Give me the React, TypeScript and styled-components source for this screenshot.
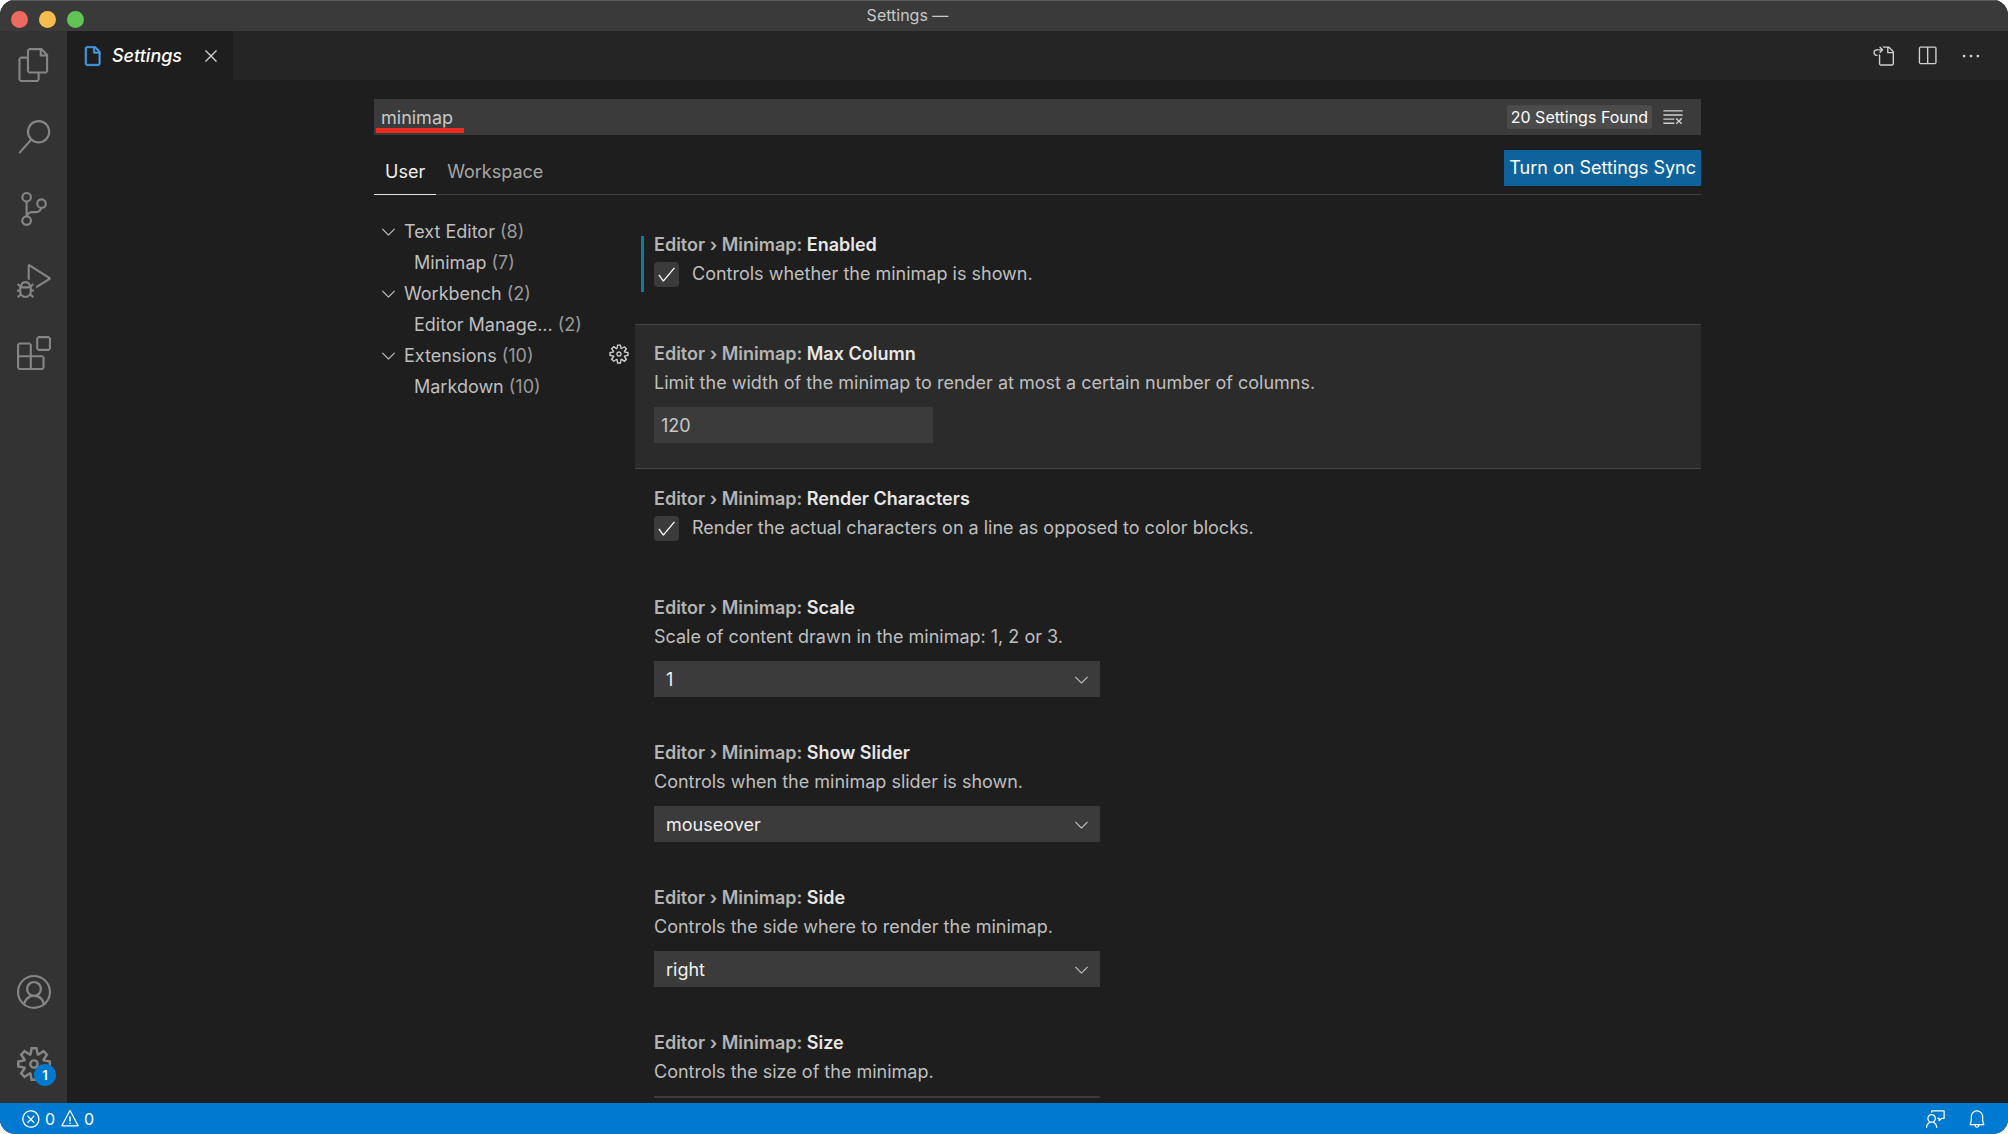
import React from "react";
import styled, { createGlobalStyle } from "styled-components";
import {
  VscAccount,
  VscBell,
  VscCheck,
  VscChevronDown,
  VscClearAll,
  VscClose,
  VscDebugAlt,
  VscEllipsis,
  VscError,
  VscExtensions,
  VscFeedback,
  VscFile,
  VscFiles,
  VscGear,
  VscGoToFile,
  VscSearch,
  VscSettingsGear,
  VscSourceControl,
  VscSplitHorizontal,
  VscWarning,
} from "react-icons/vsc";

const GlobalStyle = createGlobalStyle`
  * { box-sizing: border-box; }
  body {
    margin: 0;
    background: #ffffff;
    font-family: Inter, "Liberation Sans", sans-serif;
    font-size: 18px;
    line-height: 24px;
    color: #bfbfbf;
  }
  button, input, select { font: inherit; color: inherit; margin: 0; }
  button { background: none; border: 0; padding: 0; cursor: pointer; }
  h1, h2, ul, p { margin: 0; padding: 0; font: inherit; list-style: none; }
  a { color: inherit; text-decoration: none; }
`;

const Window = styled.div`
  display: flex;
  flex-direction: column;
  height: 100vh;
  overflow: hidden;
  border-radius: 15px;
  background: #1e1e1e;
`;

const TitleBar = styled.header`
  display: flex;
  align-items: flex-start;
  flex: none;
  height: 31px;
  padding: 2px 11px 0;
  background: #3a3a3a;
  border-top: 1px solid #5c5c5c;
`;

const Lights = styled.div`
  display: flex;
  gap: 11px;
  padding-top: 8px;
`;

const Light = styled.button<{ $color: string }>`
  width: 17px;
  height: 17px;
  border-radius: 50%;
  background: ${(p) => p.$color};
`;

const WindowTitle = styled.h1`
  flex: 1;
  padding-right: 266px;
  text-align: center;
  font-size: 16px;
  color: #c8c8c8;
`;

const Main = styled.div`
  display: flex;
  flex: 1;
  min-height: 0;
`;

const ActivityBar = styled.nav`
  display: flex;
  flex-direction: column;
  justify-content: space-between;
  flex: none;
  width: 67px;
  padding: 2px 0 7px;
  background: #333333;
`;

const ActivityGroup = styled.div`
  display: flex;
  flex-direction: column;
  gap: 8px;
`;

const ActivityButton = styled.button`
  position: relative;
  display: grid;
  place-items: center;
  height: 64px;
  color: #858585;
  font-size: 34px;
`;

const ActivityBadge = styled.span`
  position: absolute;
  right: 11px;
  bottom: 10px;
  width: 22px;
  height: 22px;
  border-radius: 50%;
  background: #007ad0;
  color: #ffffff;
  font-size: 13px;
  font-weight: 600;
  line-height: 22px;
  text-align: center;
`;

const Editor = styled.main`
  display: flex;
  flex-direction: column;
  flex: 1;
  min-width: 0;
`;

const TabBar = styled.div`
  display: flex;
  justify-content: space-between;
  flex: none;
  height: 49px;
  background: #252526;
`;

const Tab = styled.div`
  display: flex;
  align-items: center;
  width: 166px;
  padding: 0 11px 0 14px;
  background: #1e1e1e;
  color: #ffffff;
`;

const TabIcon = styled(VscFile)`
  width: 22px;
  height: 22px;
  color: #42a5f5;
  stroke: currentColor;
  stroke-width: 0.4px;
`;

const TabLabel = styled.span`
  flex: 1;
  padding-left: 9px;
  font-style: italic;
  font-weight: 500;
`;

const IconButton = styled.button<{ $size?: number }>`
  display: grid;
  place-items: center;
  flex: none;
  font-size: ${(p) => p.$size ?? 22}px;
  color: #d0d0d0;
`;

const TabActions = styled.div`
  display: flex;
  align-items: center;
  gap: 22px;
  padding-right: 26px;
`;

const Settings = styled.section`
  display: flex;
  flex-direction: column;
  flex: 1;
  min-height: 0;
  width: 100%;
  max-width: 1367px;
  margin: 0 auto;
  padding: 19px 20px 5px;
`;

const SearchBox = styled.div`
  position: relative;
  display: flex;
  align-items: center;
  flex: none;
  height: 36px;
  padding: 0 17px 0 7px;
  background: #3b3b3b;
`;

const SearchInput = styled.input`
  flex: 1;
  min-width: 0;
  padding: 1px 0 0;
  border: 0;
  outline: 0;
  background: none;
  color: #c8c8c8;
`;

const RedMark = styled.span`
  position: absolute;
  left: 2px;
  bottom: 2px;
  width: 88px;
  height: 5px;
  background: #ee2b1f;
`;

const FoundCount = styled.span`
  margin-right: 10px;
  padding: 0 4px;
  border-radius: 3px;
  background: #4b4b4b;
  color: #ffffff;
  font-size: 16px;
`;

const ScopeBar = styled.div`
  display: flex;
  align-items: flex-end;
  justify-content: space-between;
  flex: none;
  height: 60px;
  border-bottom: 1px solid #3f3f3f;
`;

const ScopeTabs = styled.div`
  display: flex;
  margin-bottom: -1px;
`;

const ScopeTab = styled.button<{ $active?: boolean }>`
  height: 46px;
  padding: 0 11px;
  border-bottom: 1px solid ${(p) => (p.$active ? "#e7e7e7" : "transparent")};
  color: ${(p) => (p.$active ? "#f0f0f0" : "#a6a6a6")};
`;

const SyncButton = styled.button`
  height: 36px;
  margin-bottom: 8px;
  padding: 0 5px;
  background: #0e639c;
  color: #ffffff;
`;

const Body = styled.div`
  display: flex;
  flex: 1;
  min-height: 0;
`;

const Toc = styled.ul`
  flex: none;
  width: 229px;
  padding-top: 21px;
`;

const TocRow = styled.li<{ $child?: boolean }>`
  padding-left: ${(p) => (p.$child ? 40 : 4)}px;
`;

const TocLink = styled.a`
  display: flex;
  align-items: center;
  gap: 5px;
  height: 31px;
  white-space: nowrap;
`;

const TocChevron = styled(VscChevronDown)`
  width: 21px;
  height: 21px;
`;

const TocCount = styled.span`
  color: #9a9a9a;
`;

const SettingList = styled.div`
  flex: 1;
  min-width: 0;
  padding-top: 20px;
  overflow: hidden;
`;

const Item = styled.article`
  display: flex;
`;

const Gutter = styled.div`
  display: flex;
  justify-content: center;
  align-items: flex-start;
  flex: none;
  width: 32px;
  padding-top: 19px;
`;

const ItemBody = styled.div<{ $focused?: boolean; $short?: boolean; $modified?: boolean }>`
  position: relative;
  flex: 1;
  min-width: 0;
  height: ${(p) => (p.$short ? 109 : 145)}px;
  padding: 18px 19px 0;
  background: ${(p) => (p.$focused ? "#2b2b2b" : "transparent")};
  box-shadow: ${(p) => (p.$focused ? "inset 0 1px #454545, inset 0 -1px #454545" : "none")};

  &::before {
    content: "";
    display: ${(p) => (p.$modified ? "block" : "none")};
    position: absolute;
    left: 6px;
    top: 21px;
    width: 3px;
    height: 56px;
    background: #0c7d9d;
  }
`;

const ItemTitle = styled.h2`
  margin-bottom: 5px;
  font-weight: 600;
  color: #b4b4b4;
`;

const ItemName = styled.span`
  color: #e7e7e7;
`;

const CheckRow = styled.label`
  display: flex;
  gap: 13px;
`;

const CheckSlot = styled.span`
  position: relative;
  width: 25px;
  height: 25px;
`;

const CheckBox = styled.input`
  appearance: none;
  display: block;
  width: 25px;
  height: 25px;
  border-radius: 4px;
  background: #3b3b3b;

  & + svg {
    position: absolute;
    inset: 2px;
    width: 21px;
    height: 21px;
    color: #ffffff;
    pointer-events: none;
    visibility: hidden;
  }

  &:checked + svg {
    visibility: visible;
  }
`;

const Description = styled.label`
  display: block;
  margin-bottom: 12px;
`;

const TextBox = styled.input`
  display: block;
  width: 100%;
  max-width: 279px;
  height: 36px;
  padding: 1px 7px 0;
  border: 0;
  background: #3b3b3b;
  color: #c8c8c8;
`;

const SelectSlot = styled.div`
  position: relative;
  display: flex;
  align-items: center;
  width: 100%;
  max-width: 446px;

  svg {
    position: absolute;
    right: 8px;
    width: 21px;
    height: 21px;
    pointer-events: none;
  }
`;

const SelectBox = styled.select`
  appearance: none;
  width: 100%;
  height: 36px;
  padding: 1px 12px 0;
  border: 0;
  border-radius: 0;
  background: #3b3b3b;
  color: #f0f0f0;
`;

const StatusBar = styled.footer`
  display: flex;
  align-items: center;
  justify-content: space-between;
  flex: none;
  height: 31px;
  padding: 0 21px;
  background: #007ad0;
  color: #ffffff;
`;

const StatusGroup = styled.div<{ $gap: number }>`
  display: flex;
  align-items: center;
  gap: ${(p) => p.$gap}px;
`;

const StatusButton = styled.button`
  display: flex;
  align-items: center;
  gap: 4px;
  font-size: 16px;

  svg {
    width: 20px;
    height: 20px;
  }
`;

const toc = [
  { label: "Text Editor", count: 8 },
  { label: "Minimap", count: 7, child: true },
  { label: "Workbench", count: 2 },
  { label: "Editor Manage...", count: 2, child: true },
  { label: "Extensions", count: 10 },
  { label: "Markdown", count: 10, child: true },
];

type Setting = {
  id: string;
  name: string;
  text: string;
  kind: "check" | "number" | "select";
  value?: string;
  options?: string[];
  modified?: boolean;
  focused?: boolean;
};

const settings: Setting[] = [
  { id: "enabled", name: "Enabled", text: "Controls whether the minimap is shown.", kind: "check", modified: true },
  {
    id: "maxColumn",
    name: "Max Column",
    text: "Limit the width of the minimap to render at most a certain number of columns.",
    kind: "number",
    value: "120",
    focused: true,
  },
  {
    id: "renderCharacters",
    name: "Render Characters",
    text: "Render the actual characters on a line as opposed to color blocks.",
    kind: "check",
  },
  { id: "scale", name: "Scale", text: "Scale of content drawn in the minimap: 1, 2 or 3.", kind: "select", options: ["1"] },
  { id: "showSlider", name: "Show Slider", text: "Controls when the minimap slider is shown.", kind: "select", options: ["mouseover"] },
  { id: "side", name: "Side", text: "Controls the side where to render the minimap.", kind: "select", options: ["right"] },
  { id: "size", name: "Size", text: "Controls the size of the minimap.", kind: "select", options: [""] },
];

function SettingItem({ setting }: { setting: Setting }) {
  const { id, kind } = setting;
  return (
    <Item>
      <Gutter>
        {setting.focused && (
          <IconButton aria-label="More actions">
            <VscGear />
          </IconButton>
        )}
      </Gutter>
      <ItemBody $focused={setting.focused} $short={kind === "check"} $modified={setting.modified}>
        <ItemTitle>
          Editor › Minimap: <ItemName>{setting.name}</ItemName>
        </ItemTitle>
        {kind === "check" ? (
          <CheckRow>
            <CheckSlot>
              <CheckBox id={id} type="checkbox" defaultChecked />
              <VscCheck />
            </CheckSlot>
            {setting.text}
          </CheckRow>
        ) : (
          <Description htmlFor={id}>{setting.text}</Description>
        )}
        {kind === "number" && <TextBox id={id} defaultValue={setting.value} />}
        {kind === "select" && (
          <SelectSlot>
            <SelectBox id={id}>
              {setting.options?.map((option) => (
                <option key={option}>{option}</option>
              ))}
            </SelectBox>
            <VscChevronDown />
          </SelectSlot>
        )}
      </ItemBody>
    </Item>
  );
}

export default function App() {
  return (
    <>
      <GlobalStyle />
      <Window>
        <TitleBar>
          <Lights>
            <Light $color="#ee6a5f" aria-label="Close window" />
            <Light $color="#f5bd4f" aria-label="Minimize window" />
            <Light $color="#61c454" aria-label="Zoom window" />
          </Lights>
          <WindowTitle>Settings —</WindowTitle>
        </TitleBar>
        <Main>
          <ActivityBar>
            <ActivityGroup>
              <ActivityButton aria-label="Explorer"><VscFiles /></ActivityButton>
              <ActivityButton aria-label="Search"><VscSearch /></ActivityButton>
              <ActivityButton aria-label="Source control"><VscSourceControl /></ActivityButton>
              <ActivityButton aria-label="Run and debug"><VscDebugAlt /></ActivityButton>
              <ActivityButton aria-label="Extensions"><VscExtensions /></ActivityButton>
            </ActivityGroup>
            <ActivityGroup>
              <ActivityButton aria-label="Accounts"><VscAccount /></ActivityButton>
              <ActivityButton aria-label="Manage">
                <VscSettingsGear />
                <ActivityBadge>1</ActivityBadge>
              </ActivityButton>
            </ActivityGroup>
          </ActivityBar>
          <Editor>
            <TabBar>
              <Tab>
                <TabIcon />
                <TabLabel>Settings</TabLabel>
                <IconButton aria-label="Close tab"><VscClose /></IconButton>
              </Tab>
              <TabActions>
                <IconButton aria-label="Open settings file"><VscGoToFile /></IconButton>
                <IconButton aria-label="Split editor"><VscSplitHorizontal /></IconButton>
                <IconButton aria-label="More actions"><VscEllipsis /></IconButton>
              </TabActions>
            </TabBar>
            <Settings>
              <SearchBox>
                <SearchInput aria-label="Search settings" defaultValue="minimap" />
                <FoundCount>20 Settings Found</FoundCount>
                <IconButton aria-label="Clear search"><VscClearAll /></IconButton>
                <RedMark />
              </SearchBox>
              <ScopeBar>
                <ScopeTabs>
                  <ScopeTab $active>User</ScopeTab>
                  <ScopeTab>Workspace</ScopeTab>
                </ScopeTabs>
                <SyncButton>Turn on Settings Sync</SyncButton>
              </ScopeBar>
              <Body>
                <Toc>
                  {toc.map((row) => (
                    <TocRow key={row.label} $child={row.child}>
                      <TocLink href="#">
                        {!row.child && <TocChevron />}
                        {row.label}
                        <TocCount>({row.count})</TocCount>
                      </TocLink>
                    </TocRow>
                  ))}
                </Toc>
                <SettingList>
                  {settings.map((setting) => (
                    <SettingItem key={setting.id} setting={setting} />
                  ))}
                </SettingList>
              </Body>
            </Settings>
          </Editor>
        </Main>
        <StatusBar>
          <StatusGroup $gap={5}>
            <StatusButton><VscError />0</StatusButton>
            <StatusButton><VscWarning />0</StatusButton>
          </StatusGroup>
          <StatusGroup $gap={21}>
            <StatusButton aria-label="Feedback"><VscFeedback /></StatusButton>
            <StatusButton aria-label="Notifications"><VscBell /></StatusButton>
          </StatusGroup>
        </StatusBar>
      </Window>
    </>
  );
}
